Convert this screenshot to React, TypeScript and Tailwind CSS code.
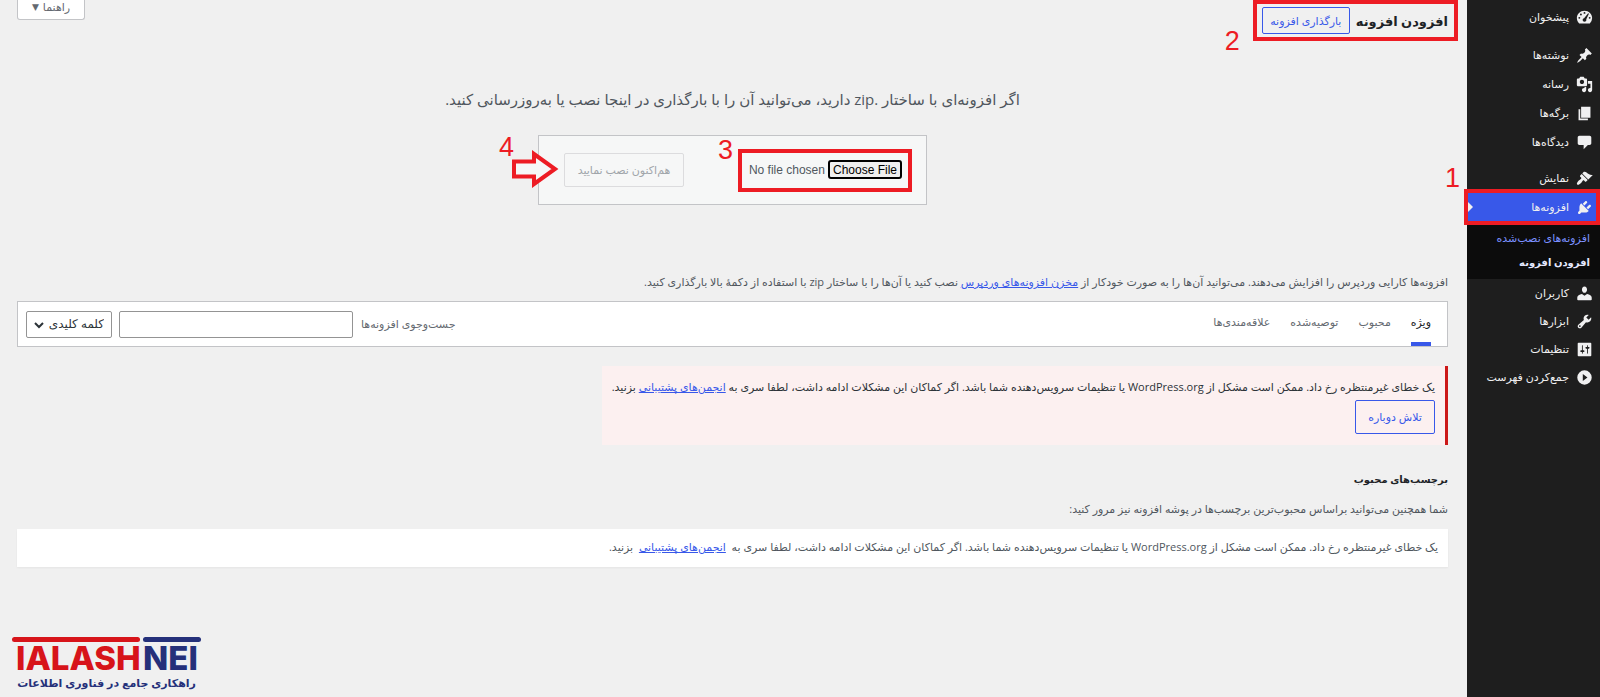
import type { ReactNode } from "react";

type IconName = keyof typeof iconPaths;

const iconPaths = {
  dashboard:
    "M3.76 17h12.48A8.9 8.9 0 0 0 19 10.700C19 5.900 15 2 10 2S1 5.900 1 10.700C1 13.200 2 15.400 3.760 17zM10 3.500a1.100 1.100 0 1 1 0 2.200 1.100 1.100 0 0 1 0-2.200zM5.800 5.300a1.100 1.100 0 1 1 0 2.200 1.100 1.100 0 0 1 0-2.200zM14.300 5l.9.700-3.100 6.300c.5 1.600-.6 2.900-2.100 2.900-1.700 0-2.800-1.800-1.900-3.200.3-.5.800-.8 1.400-.9zM3.900 9.300a1.100 1.100 0 1 1 0 2.200 1.100 1.100 0 0 1 0-2.200zM16.100 9.300a1.100 1.100 0 1 1 0 2.200 1.100 1.100 0 0 1 0-2.200z",
  post: "M10.44 3.02l1.82-1.82 6.36 6.35-1.83 1.82c-1.05-.68-2.48-.57-3.41.36l-.75.75c-.92.93-1.04 2.35-.35 3.41l-1.83 1.82-2.41-2.41-2.8 2.79c-.42.42-3.38 2.71-3.8 2.29s1.86-3.39 2.28-3.81l2.79-2.79L4.100 9.370l1.830-1.820c1.050.690 2.480.570 3.400-.360l.750-.750c.930-.920 1.050-2.350.360-3.420z",
  media:
    "M13 11V4c0-.55-.45-1-1-1h-1.67L9 1H5L3.67 3H2c-.55 0-1 .45-1 1v7c0 .55.45 1 1 1h10c.55 0 1-.45 1-1zM7 4.500c1.380 0 2.500 1.120 2.500 2.500S8.380 9.500 7 9.500 4.500 8.380 4.500 7 5.620 4.500 7 4.500zM14 6h5v10.500c0 1.380-1.120 2.500-2.500 2.500S14 17.880 14 16.500s1.120-2.500 2.500-2.500c.170 0 .340.020.500.050V9h-3V6zM10 14.050V13h2v3.500c0 1.380-1.120 2.500-2.500 2.500S7 17.880 7 16.500 8.120 14 9.500 14c.170 0 .340.020.500.050z",
  page: "M6 15V2h11v13H6zM5 16h9v2H3V5h2v11z",
  comments:
    "M4 2h12c1.100 0 2 .900 2 2v7c0 1.100-.900 2-2 2h-2l-5 5v-5H4c-1.100 0-2-.900-2-2V4c0-1.100.900-2 2-2z",
  appearance:
    "M14.48 11.06L7.41 3.99l1.5-1.5c.5-.56 2.3-.47 3.51.32 1.21.8 1.43 1.28 2.91 2.1 1.18.64 2.45 1.26 4.45.85zm-.71.71L6.7 4.7 4.93 6.47c-.39.39-.39 1.02 0 1.41l1.06 1.06c.39.39.39 1.03 0 1.42-.6.6-1.43 1.11-2.21 1.69-.35.26-.7.53-1.01.84C1.43 14.23.4 16.08 1.4 17.07c.99 1 2.84-.03 4.18-1.36.31-.31.58-.66.85-1.02.57-.78 1.08-1.61 1.69-2.21.39-.39 1.02-.39 1.41 0l1.06 1.06c.39.39 1.02.39 1.41 0z",
  plugins:
    "M13.11 4.36L9.87 7.6 8 5.73l3.24-3.24c.35-.34 1.05-.2 1.56.32.52.51.66 1.21.31 1.55zm-8 1.77l.91-1.12 9.01 9.01-1.19.84c-.71.71-2.63 1.16-3.82 1.16H6.14L4.9 17.26c-.59.59-1.54.59-2.12 0-.59-.58-.59-1.53 0-2.12l1.24-1.24v-3.88c0-1.13.4-3.19 1.09-3.89zm7.26 3.97l3.24-3.24c.34-.35 1.04-.21 1.55.31.52.51.66 1.21.31 1.55l-3.24 3.25z",
  users:
    "M10 9.250C7.730 9.250 7 6 7 5.500 7 3.500 8 1.800 10 1.800s3 1.700 3 3.700c0 .5-.7 3.750-3 3.750zM10 12.500L13 10.500c3 .3 5.500 2 5.500 4.300V17c0 .6-.4 1-1 1h-15c-.6 0-1-.4-1-1v-2.200c0-2.300 2.500-4 5.500-4.300z",
  tools:
    "M16.68 9.77c-1.34 1.34-3.3 1.67-4.95.99l-5.41 6.52c-.99.99-2.59.99-3.58 0s-.99-2.59 0-3.57l6.52-5.42c-.68-1.65-.35-3.61.99-4.95 1.28-1.28 3.12-1.62 4.72-1.06l-2.89 2.89 2.82 2.82 2.86-2.87c.53 1.58.18 3.39-1.08 4.65zM3.81 16.21c.4.39 1.04.39 1.43 0 .4-.4.4-1.04 0-1.43-.39-.4-1.03-.4-1.43 0-.39.39-.39 1.03 0 1.43z",
  settings:
    "M18 17V3c0-.55-.45-1-1-1H3c-.55 0-1 .45-1 1v14c0 .55.45 1 1 1h14c.55 0 1-.45 1-1zM8 11h1c.55 0 1 .45 1 1s-.45 1-1 1H8v1.500c0 .280-.220.500-.500.500s-.500-.220-.500-.500V13H6c-.55 0-1-.45-1-1s.45-1 1-1h1V5.500c0-.280.220-.500.500-.500s.500.220.500.500V11zm5-2h-1c-.55 0-1-.45-1-1s.45-1 1-1h1V5.500c0-.280.220-.500.500-.500s.500.220.500.500V7h1c.55 0 1 .45 1 1s-.45 1-1 1h-1v5.500c0 .280-.220.500-.500.500s-.500-.220-.500-.500V9z",
  collapse: "M10 1.500a8.500 8.500 0 1 0 0 17 8.500 8.500 0 0 0 0-17zM8 6l5.500 4L8 14z",
};

const upperMenu: { icon: IconName; label: string }[] = [
  { icon: "post", label: "نوشته‌ها" },
  { icon: "media", label: "رسانه" },
  { icon: "page", label: "برگه‌ها" },
  { icon: "comments", label: "دیدگاه‌ها" },
];

const lowerMenu: { icon: IconName; label: string }[] = [
  { icon: "users", label: "کاربران" },
  { icon: "tools", label: "ابزارها" },
  { icon: "settings", label: "تنظیمات" },
];

const tabs = ["ویژه", "محبوب", "توصیه‌شده", "علاقه‌مندی‌ها"];

function Icon({ name }: { name: IconName }) {
  return (
    <svg viewBox="0 0 20 20" className="size-[17px] shrink-0" fill="#f0f0f1" fillRule="evenodd" aria-hidden="true">
      <path d={iconPaths[name]} />
    </svg>
  );
}

function MenuItem({ icon, label }: { icon: IconName; label: string }) {
  return (
    <a href="#" className="flex h-7 items-center gap-[7px] pr-[7px] text-[#f0f0f1]">
      <Icon name={icon} />
      {label}
    </a>
  );
}

function StepNumber({ className, children }: { className: string; children: ReactNode }) {
  return (
    <span className={`absolute font-["Liberation_Sans",sans-serif] text-[27px] leading-none text-[#ed1c24] ${className}`}>
      {children}
    </span>
  );
}

function Link({ children }: { children: ReactNode }) {
  return (
    <a href="#" className="text-[#3858e9] underline">
      {children}
    </a>
  );
}

function Sidebar() {
  return (
    <nav className="w-[133px] shrink-0 bg-[#1e1e1e] pt-[3px] text-[11px]">
      <MenuItem icon="dashboard" label="پیشخوان" />
      <div className="mt-2.5 flex flex-col gap-px">
        {upperMenu.map((item) => (
          <MenuItem key={item.label} {...item} />
        ))}
      </div>
      <div className="mt-2 flex flex-col gap-px">
        <MenuItem icon="appearance" label="نمایش" />
        <div className="relative bg-[#3858e9]">
          <MenuItem icon="plugins" label="افزونه‌ها" />
          <svg viewBox="0 0 6 12" className="absolute top-2 left-0 h-3 w-1.5" fill="#f0f0f0" aria-hidden="true">
            <path d="M0 0l6 6-6 6z" />
          </svg>
          <div className="absolute -inset-y-1 right-0 -left-[3px] border-4 border-[#ed1c24]" />
          <StepNumber className="-top-7 -left-[22px]">1</StepNumber>
        </div>
      </div>
      <div className="flex h-[58px] flex-col justify-center gap-1 bg-[#0c0c0c] pr-2.5 leading-5">
        <a href="#" className="whitespace-nowrap text-[#7b90ff]">
          افزونه‌های نصب‌شده
        </a>
        <a href="#" className="text-[10px] font-bold whitespace-nowrap text-[#e6e9ff]">
          افزودن افزونه
        </a>
      </div>
      {lowerMenu.map((item) => (
        <MenuItem key={item.label} {...item} />
      ))}
      <button type="button" className="flex h-7 items-center gap-[7px] pr-[7px] whitespace-nowrap text-[#f0f0f1]">
        <Icon name="collapse" />
        جمع‌کردن فهرست
      </button>
    </nav>
  );
}

function UploadForm() {
  return (
    <form className="relative mx-auto mt-6 flex h-[70px] w-[389px] items-center justify-between border border-[#c3c4c7] bg-[#f6f7f7] pr-3.5 pl-[25px]">
      <div className="relative border-4 border-[#ed1c24] py-[7px] pr-1.5 pl-1">
        <input
          type="file"
          aria-label="فایل zip افزونه"
          className='block h-[21px] w-[156px] font-["Liberation_Sans",sans-serif] text-[12px] leading-5 text-[#50575e] file:ml-[3px] file:h-[19px] file:rounded-[3px] file:border-2 file:border-solid file:border-black file:bg-[#efefef] file:px-[3px] file:text-[12px] file:leading-none file:text-black'
        />
        <StepNumber className="-top-4 -left-6">3</StepNumber>
      </div>
      <button type="button" disabled className="h-[34px] w-[120px] rounded-[2px] border border-[#dcdcde] text-[11px] text-[#a0a5aa]">
        هم‌اکنون نصب نمایید
      </button>
      <svg viewBox="0 0 50 38" className="absolute top-3.5 -left-7 h-[38px] w-[50px]" fill="#f6f7f7" stroke="#ed1c24" strokeWidth="4" aria-hidden="true">
        <path d="M3 11.500h20V4l21 15-21 15v-7.500H3z" />
      </svg>
      <StepNumber className="-top-0.5 -left-10">4</StepNumber>
    </form>
  );
}

function FilterBar() {
  return (
    <div className="mt-[9px] flex h-[46px] items-center border border-[#c3c4c7] bg-white pr-4 pl-2">
      <div className="flex h-full gap-5">
        {tabs.map((tab, index) => (
          <a
            key={tab}
            href="#"
            className={
              index === 0
                ? "flex items-center border-b-4 border-[#3858e9] text-[#1d2327]"
                : "flex items-center border-b-4 border-transparent text-[#646970]"
            }
          >
            {tab}
          </a>
        ))}
      </div>
      <label htmlFor="search-plugins" className="mr-auto text-[#646970]">
        جست‌وجوی افزونه‌ها
      </label>
      <input id="search-plugins" type="search" className="mr-2 h-[27px] w-[234px] rounded-[2px] border border-[#949494] px-2" />
      <div className="relative mr-[7px]">
        <select aria-label="جست‌وجو بر اساس" className="block h-[27px] w-[86px] appearance-none rounded-[2px] border border-[#949494] bg-white pr-[7px] text-[12px] text-[#2c3338]">
          <option>کلمه کلیدی</option>
          <option>نویسنده</option>
          <option>برچسب</option>
        </select>
        <svg viewBox="0 0 10 10" className="pointer-events-none absolute top-[9px] left-2 size-2.5" fill="none" stroke="#2c3338" strokeWidth="2" aria-hidden="true">
          <path d="M1 3l4 4 4-4" />
        </svg>
      </div>
    </div>
  );
}

function Logo() {
  return (
    <div dir="ltr" className="mb-1.5 flex w-[189px] flex-col">
      <div className="flex gap-[3px]">
        <div className="w-32">
          <div className="h-[5px] rounded-full bg-[#d7141a]" />
          <div className='pl-1 font-["Inter",sans-serif] text-[33px] leading-none font-extrabold text-[#d7141a]'>IALASH</div>
        </div>
        <div className="flex-1">
          <div className="h-[5px] rounded-full bg-[#25307a]" />
          <div className='font-["Inter",sans-serif] text-[33px] leading-none font-extrabold text-[#25307a]'>NEI</div>
        </div>
      </div>
      <div dir="rtl" className="text-center text-[11px] leading-4 font-bold whitespace-nowrap text-[#25307a]">
        راهکاری جامع در فناوری اطلاعات
      </div>
    </div>
  );
}

export default function App() {
  return (
    <div dir="rtl" className='flex min-h-screen bg-[#f0f0f0] font-["Open_Sans","DejaVu_Sans",sans-serif] text-[11px] leading-5 text-[#50575e]'>
      <Sidebar />
      <main className="flex min-w-0 flex-1 flex-col pr-[9px] pl-3">
        <header className="flex items-start justify-between pl-[5px]">
          <div className="relative flex h-[41px] items-center gap-1.5 border-4 border-[#ed1c24] pr-1.5 pl-[5px]">
            <h1 className="text-[13px] font-bold whitespace-nowrap text-[#1d2327]">افزودن افزونه</h1>
            <button type="button" className="h-[27px] w-[88px] rounded-[2px] border border-[#3858e9] text-[#3858e9]">
              بارگذاری افزونه
            </button>
            <StepNumber className="top-6 -left-8">2</StepNumber>
          </div>
          <button type="button" className="flex h-5 w-[68px] items-center justify-center gap-1 rounded-b-[3px] border border-t-0 border-[#c3c4c7] bg-white pb-1.5 text-[#646970]">
            راهنما <span className="text-[9px]">▼</span>
          </button>
        </header>
        <div className="pr-2.5 pl-[5px]">
          <p className="mt-[46px] text-center text-[15px] leading-6">
            اگر افزونه‌ای با ساختار .zip دارید، می‌توانید آن را با بارگذاری در اینجا نصب یا به‌روزرسانی کنید.
          </p>
          <UploadForm />
          <p className="mt-[67px]">
            افزونه‌ها کارایی وردپرس را افزایش می‌دهند. می‌توانید آن‌ها را به صورت خودکار از <Link>مخزن افزونه‌های وردپرس</Link> نصب کنید یا آن‌ها را با ساختار zip با استفاده از دکمهٔ بالا بارگذاری کنید.
          </p>
          <FilterBar />
          <div className="mt-[19px] h-[79px] w-fit border-r-[3px] border-[#cc1818] bg-[#fcf0f0] pt-[11px] pr-2.5 pl-2.5 text-[#2c3338]">
            <p>
              یک خطای غیرمنتظره رخ داد. ممکن است مشکل از WordPress.org یا تنظیمات سرویس‌دهنده شما باشد. اگر کماکان این مشکلات ادامه داشت، لطفا سری به <Link>انجمن‌های پشتیبانی</Link> بزنید.
            </p>
            <button type="button" className="mt-[3px] h-[34px] w-20 rounded-[2px] border border-[#3858e9] text-[#3858e9]">
              تلاش دوباره
            </button>
          </div>
          <h2 className="mt-6 text-[10px] leading-5 font-bold text-[#1d2327]">برچسب‌های محبوب</h2>
          <p className="mt-2.5">شما همچنین می‌توانید براساس محبوب‌ترین برچسب‌ها در پوشه افزونه نیز مرور کنید:</p>
          <div className="mt-2.5 bg-white px-2.5 pt-2 pb-2.5 shadow-xs">
            یک خطای غیرمنتظره رخ داد. ممکن است مشکل از WordPress.org یا تنظیمات سرویس‌دهنده شما باشد. اگر کماکان این مشکلات ادامه داشت، لطفا سری به&nbsp; <Link>انجمن‌های پشتیبانی</Link>&nbsp; بزنید.
          </div>
        </div>
        <div className="mt-auto flex justify-end">
          <Logo />
        </div>
      </main>
    </div>
  );
}
